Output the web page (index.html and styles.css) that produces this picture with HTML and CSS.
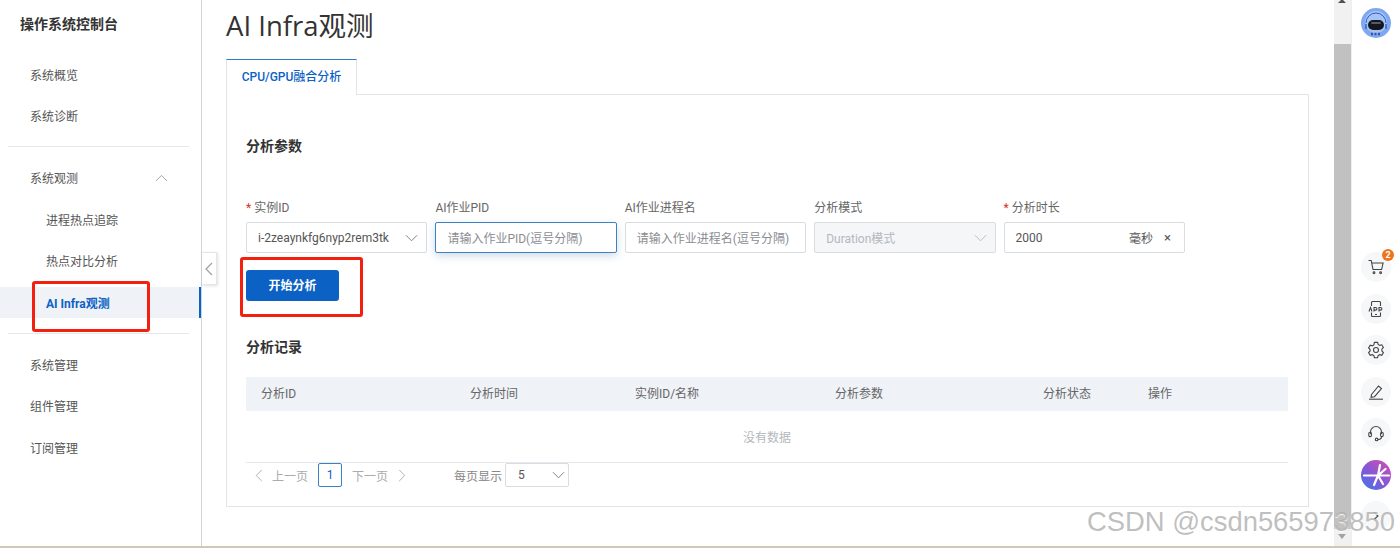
FILE: index.html
```html
<!DOCTYPE html>
<html lang="zh-CN">

<head>
    <meta charset="UTF-8">
    <meta name="viewport" content="width=device-width, initial-scale=1.0">
    <title>AI Infra观测</title>
    <link rel="stylesheet" href="styles.css">
</head>

<body>
    <div class="page">
        <!-- Sidebar -->
        <aside class="sidebar">
            <div class="brand">操作系统控制台</div>
            <nav class="menu">
                <a class="menu-item">系统概览</a>
                <a class="menu-item">系统诊断</a>
                <div class="menu-line line-one"></div>
                <a class="menu-item menu-open">系统观测
                    <svg class="menu-arrow" viewBox="0 0 14 8"><path d="M1 7.2 7 1.2l6 6" /></svg>
                </a>
                <a class="menu-item sub">进程热点追踪</a>
                <a class="menu-item sub">热点对比分析</a>
                <a class="menu-item sub active">AI Infra观测</a>
                <div class="menu-line line-two"></div>
                <a class="menu-item">系统管理</a>
                <a class="menu-item">组件管理</a>
                <a class="menu-item">订阅管理</a>
            </nav>
        </aside>

        <!-- Main content -->
        <main class="content">
            <h1 class="title">AI Infra观测</h1>
            <div class="tabs"><div class="tab">CPU/GPU融合分析</div></div>

            <section class="panel">
                <h2 class="section-title first">分析参数</h2>

                <div class="form-row">
                    <div class="field">
                        <label class="label"><span class="req">*</span>实例ID</label>
                        <div class="input select">
                            <span class="value">i-2zeaynkfg6nyp2rem3tk</span>
                            <svg class="chev" viewBox="0 0 14 8"><path d="M1 1l6 6 6-6" /></svg>
                        </div>
                    </div>
                    <div class="field">
                        <label class="label">AI作业PID</label>
                        <div class="input focus"><span class="holder">请输入作业PID(逗号分隔)</span></div>
                    </div>
                    <div class="field">
                        <label class="label">AI作业进程名</label>
                        <div class="input"><span class="holder">请输入作业进程名(逗号分隔)</span></div>
                    </div>
                    <div class="field">
                        <label class="label">分析模式</label>
                        <div class="input select disabled">
                            <span class="value">Duration模式</span>
                            <svg class="chev" viewBox="0 0 14 8"><path d="M1 1l6 6 6-6" /></svg>
                        </div>
                    </div>
                    <div class="field">
                        <label class="label"><span class="req">*</span>分析时长</label>
                        <div class="input">
                            <span class="value">2000</span>
                            <span class="unit">毫秒</span>
                            <span class="clear">×</span>
                        </div>
                    </div>
                </div>

                <button class="btn-primary">开始分析</button>

                <h2 class="section-title second">分析记录</h2>

                <div class="grid-head">
                    <div>分析ID</div>
                    <div>分析时间</div>
                    <div>实例ID/名称</div>
                    <div>分析参数</div>
                    <div>分析状态</div>
                    <div>操作</div>
                </div>
                <div class="grid-empty">没有数据</div>

                <div class="pager">
                    <svg class="pager-arrow" viewBox="0 0 8 14"><path d="M7 1 1 7l6 6" /></svg>
                    <span class="pager-text prev">上一页</span>
                    <span class="pager-num">1</span>
                    <span class="pager-text next">下一页</span>
                    <svg class="pager-arrow" viewBox="0 0 8 14"><path d="M1 1l6 6-6 6" /></svg>
                    <span class="pager-size">每页显示</span>
                    <div class="size-select">
                        <span>5</span>
                        <svg class="chev" viewBox="0 0 14 8"><path d="M1 1l6 6 6-6" /></svg>
                    </div>
                </div>
            </section>
        </main>

        <!-- Browser scrollbar -->
        <div class="scrollbar">
            <div class="scroll-up"></div>
            <div class="scroll-thumb"></div>
            <div class="scroll-down"></div>
        </div>

        <!-- Right tool rail -->
        <aside class="rail">
            <svg class="avatar" viewBox="0 0 30 30">
                <circle cx="15" cy="15" r="15" fill="#80a8f0" />
                <circle cx="15" cy="14" r="11" fill="#a6c3f6" />
                <path d="M5 15a10 10 0 0 1 20 0" fill="none" stroke="#2f5fc0" stroke-width="1" />
                <path d="M5 16v5M25 16v5" stroke="#2f5fc0" stroke-width="1.4" />
                <rect x="7" y="12" width="16" height="10" rx="5" fill="#14171d" />
                <rect x="10" y="14" width="10" height="2" rx="1" fill="#555c68" />
                <path d="M10 26h10" stroke="#2f54b0" stroke-width="2.5" stroke-dasharray="2 1.5" />
            </svg>

            <div class="rail-tools">
                <div class="tool">
                    <svg viewBox="0 0 18 18"><path d="M1.5 2.5h2.7l1.8 9h8.6l1.5-6.5H4.8" /><circle cx="7" cy="14.8" r=".9" /><circle cx="13.6" cy="14.8" r=".9" /></svg>
                    <span class="badge">2</span>
                </div>
                <div class="tool">
                    <svg viewBox="0 0 18 18"><path d="M4.5 6V2.5a1 1 0 0 1 1-1h7a1 1 0 0 1 1 1V6M4.5 12.5v3a1 1 0 0 0 1 1h7a1 1 0 0 0 1-1v-3" /><path d="M2 11.5l1.5-4 1.5 4M7 11.5v-4h1.6a1.2 1.2 0 0 1 0 2.6H7M12 11.5v-4h1.6a1.2 1.2 0 0 1 0 2.6H12M8 14.5h2" /></svg>
                </div>
                <div class="tool">
                    <svg viewBox="0 0 18 18"><path d="M7.4 1.8h3.2l.5 2.1 1.6.9 2.1-.6 1.6 2.7-1.5 1.6v1.9l1.5 1.6-1.6 2.7-2.1-.6-1.6.9-.5 2.1H7.4l-.5-2.1-1.6-.9-2.1.6-1.6-2.7 1.5-1.6V8.9L1.6 7.3l1.6-2.7 2.1.6 1.6-.9z" transform="translate(0 -.4)" /><circle cx="9" cy="9" r="2.5" /></svg>
                </div>
                <div class="tool">
                    <svg viewBox="0 0 18 18"><path d="M4.5 11.5 11.5 3l3 2.5-7 8.2-3.4.6z" /><path d="M2 16.2h14" /></svg>
                </div>
                <div class="tool">
                    <svg viewBox="0 0 18 18"><path d="M3.5 10V8a5.5 5.5 0 0 1 11 0v2" /><rect x="1.8" y="8.2" width="2.6" height="4.4" rx="1.2" /><rect x="13.6" y="8.2" width="2.6" height="4.4" rx="1.2" /><path d="M14.6 12.6c0 2-1.6 3-3.6 3" /><circle cx="9.6" cy="15.4" r="1.3" /></svg>
                </div>
                <svg class="spark" viewBox="0 0 30 30">
                    <defs>
                        <linearGradient id="sparkFill" x1="0.9" y1="0" x2="0.1" y2="1">
                            <stop offset="0" stop-color="#d24fb0" />
                            <stop offset="0.55" stop-color="#8358d8" />
                            <stop offset="1" stop-color="#3f78e8" />
                        </linearGradient>
                    </defs>
                    <circle cx="15" cy="15" r="15" fill="url(#sparkFill)" />
                    <path d="M3 15.5h25M17 15.5 19 5M17 15.5l7.5-6.5M17 15.5l5 8.5M17 15.5 13 25" fill="none" stroke="#fff" stroke-width="2.2" stroke-linecap="round" />
                </svg>
                <div class="tool">
                    <svg viewBox="0 0 18 18"><path d="M7 5.5l4 3.5-4 3.5" /></svg>
                </div>
            </div>
        </aside>
    </div>

    <!-- Things lying over the page -->
    <div class="collapse-handle">
        <svg viewBox="0 0 8 14"><path d="M7 1 1 7l6 6" /></svg>
    </div>
    <div class="mark mark-menu"></div>
    <div class="mark mark-btn"></div>
    <div class="watermark">CSDN @csdn565973850</div>
</body>

</html>
```

FILE: styles.css
```css
/* Reset */
* {
    margin: 0;
    padding: 0;
    box-sizing: border-box;
}

html,
body {
    height: 100%;
    overflow: hidden;
}

body {
    position: relative;
    background: #fff;
    color: #333;
    font-family: Roboto, "Noto Sans CJK SC", sans-serif;
    font-size: 12px;
    border-bottom: 2px solid #cfc8b2;
}

.page {
    display: flex;
    height: 546px;
}

/* Sidebar */
.sidebar {
    width: 202px;
    flex-shrink: 0;
    border-right: 1px solid #cfd2d6;
}

.brand {
    height: 48px;
    padding-left: 20px;
    line-height: 48px;
    font-size: 14px;
    font-weight: 700;
    color: #333;
}

.menu {
    display: flex;
    flex-direction: column;
    padding-top: 5.5px;
}

.menu-item {
    display: flex;
    align-items: center;
    justify-content: space-between;
    height: 41.5px;
    padding: 0 33px 0 30px;
    color: #555;
}

.menu-item.sub {
    padding-left: 46px;
}

.menu-item.active {
    height: 31px;
    margin-top: 5.5px;
    margin-bottom: 6px;
    padding-bottom: 1px;
    background: #eff2f7;
    border-right: 2px solid #0b62c4;
    color: #0b62c4;
    font-weight: 700;
}

.menu-arrow {
    width: 13px;
    height: 8px;
    fill: none;
    stroke: #9a9ea4;
    stroke-width: 1;
}

.menu-line {
    height: 1px;
    margin: 0 12px 0 8px;
    background: #e6e8eb;
}

.line-one {
    margin-top: 9.5px;
    margin-bottom: 10px;
}

.line-two {
    margin-top: 9px;
    margin-bottom: 9.5px;
}

/* Main content */
.content {
    flex: 1;
    min-width: 0;
    padding: 0 25px 0 24px;
}

.title {
    height: 59px;
    padding-top: 6px;
    line-height: 40px;
    font-family: "Open Sans", "Noto Sans CJK SC", sans-serif;
    font-size: 27.5px;
    font-weight: 400;
    color: #333;
}

.tabs {
    display: flex;
    height: 36px;
    margin-bottom: -1px;
}

.tab {
    position: relative;
    width: 131px;
    border: 1px solid #e1e4e8;
    border-top: 1px solid #2a80c8;
    border-bottom: 0;
    background: #fff;
    line-height: 35px;
    text-align: center;
    color: #0b62c4;
    font-weight: 500;
    z-index: 1;
}

.panel {
    height: 413px;
    padding: 0 20px 0 19px;
    border: 1px solid #e1e4e8;
}

.section-title {
    font-size: 14px;
    font-weight: 700;
    line-height: 20px;
    color: #333;
}

.section-title.first {
    padding-top: 41px;
    height: 61px;
}

.section-title.second {
    margin-top: 36px;
}

/* Form */
.form-row {
    display: flex;
    gap: 8px;
    margin-top: 42px;
}

.field {
    width: 181.4px;
}

.label {
    display: block;
    height: 24px;
    line-height: 20px;
    color: #666;
}

.req {
    margin-right: 3px;
    color: #d0342c;
}

.input {
    display: flex;
    align-items: center;
    height: 31px;
    padding: 0 11px;
    border: 1px solid #d9dce0;
    border-radius: 2px;
    background: #fff;
    color: #555;
    white-space: nowrap;
}

.input.select {
    padding-right: 8px;
}

.input.focus {
    border-color: #3b82c4;
    box-shadow: 0 3px 8px rgba(40, 90, 150, 0.22);
}

.input.disabled {
    background: #f4f6f8;
    color: #b4b8bd;
}

.holder {
    color: #8a8d92;
}

.value {
    flex: 1;
}

.unit {
    margin-right: 11px;
}

.clear {
    margin-right: 2px;
    font-size: 13px;
}

.chev {
    flex-shrink: 0;
    width: 13px;
    height: 8px;
    fill: none;
    stroke: #777;
    stroke-width: 1;
}

.disabled .chev {
    stroke: #b4b8bd;
}

.btn-primary {
    display: block;
    width: 93px;
    height: 31px;
    margin-top: 17px;
    padding-bottom: 2px;
    border: 0;
    border-radius: 3px;
    background: #0b62c4;
    color: #fff;
    font-family: inherit;
    font-size: 12px;
    font-weight: 700;
}

/* Records */
.grid-head {
    display: grid;
    grid-template-columns: 209px 165px 200px 208px 105px 155px;
    height: 34px;
    margin-top: 20px;
    background: #eff2f7;
    line-height: 34px;
    color: #666;
}

.grid-head div {
    padding-left: 15px;
}

.grid-empty {
    height: 52px;
    border-bottom: 1px solid #e6e8eb;
    line-height: 54px;
    text-align: center;
    color: #b4b8bd;
}

.pager {
    display: flex;
    align-items: center;
    height: 24px;
    padding-left: 9px;
    color: #a8abb0;
}

.pager-arrow {
    width: 8px;
    height: 13px;
    fill: none;
    stroke: #a8abb0;
    stroke-width: 1;
}

.pager-text.prev {
    margin: 0 10px 0 9px;
}

.pager-text.next {
    margin: 0 10px;
}

.pager-num {
    width: 24px;
    height: 24px;
    border: 1px solid #3b82c4;
    border-radius: 2px;
    line-height: 22px;
    text-align: center;
    color: #0b62c4;
}

.pager-size {
    margin-left: 48px;
    color: #888;
}

.size-select {
    display: flex;
    align-items: center;
    justify-content: space-between;
    width: 64px;
    height: 24px;
    margin-left: 3px;
    padding: 0 3px 0 12px;
    border: 1px solid #d9dce0;
    border-radius: 2px;
    color: #555;
}

/* Scrollbar */
.scrollbar {
    display: flex;
    flex-direction: column;
    width: 17px;
    flex-shrink: 0;
    background: #f1f1f1;
}

.scroll-up,
.scroll-down {
    height: 17px;
    flex-shrink: 0;
    position: relative;
}

.scroll-up::after,
.scroll-down::after {
    content: "";
    position: absolute;
    left: 4px;
    border-left: 4px solid transparent;
    border-right: 4px solid transparent;
}

.scroll-up::after {
    top: -1px;
    border-bottom: 4px solid #505050;
}

.scroll-down::after {
    top: 5px;
    border-top: 5px solid #a3a3a3;
}

.scroll-thumb {
    flex: 1;
    margin: 27px 0 0;
    background: #c1c1c1;
}

/* Right rail */
.rail {
    width: 49px;
    flex-shrink: 0;
    border-left: 1px solid #eceef0;
    padding-top: 8px;
    display: flex;
    flex-direction: column;
    align-items: center;
}

.avatar {
    width: 30px;
    height: 30px;
    flex-shrink: 0;
}

.rail-tools {
    display: flex;
    flex-direction: column;
    align-items: center;
    gap: 11.5px;
    margin-top: 214px;
}

.tool {
    position: relative;
    display: flex;
    align-items: center;
    justify-content: center;
    width: 30px;
    height: 30px;
    border-radius: 50%;
    background: #f6f7f8;
}

.tool svg {
    width: 18px;
    height: 18px;
    fill: none;
    stroke: #444;
    stroke-width: 1.1;
}

.badge {
    position: absolute;
    top: -3px;
    right: -3px;
    width: 12px;
    height: 12px;
    border-radius: 50%;
    background: #f0721e;
    color: #fff;
    font-size: 9px;
    font-weight: 700;
    line-height: 12px;
    text-align: center;
}

.spark {
    width: 30px;
    height: 30px;
}

/* Overlays */
.collapse-handle {
    position: absolute;
    left: 202px;
    top: 252px;
    display: flex;
    align-items: center;
    justify-content: center;
    width: 15px;
    height: 33px;
    background: #fff;
    border: 1px solid #e4e6e9;
    border-left: 0;
    box-shadow: 1px 1px 3px rgba(0, 0, 0, 0.12);
}

.collapse-handle svg {
    width: 8px;
    height: 14px;
    fill: none;
    stroke: #9a9ea4;
    stroke-width: 1.2;
}

.mark {
    position: absolute;
    border: 3px solid #f3200f;
    border-radius: 3px;
}

.mark-menu {
    left: 32px;
    top: 281px;
    width: 118px;
    height: 51px;
}

.mark-btn {
    left: 240px;
    top: 257px;
    width: 123px;
    height: 60px;
}

.watermark {
    position: absolute;
    left: 1087px;
    top: 505px;
    font-family: "Liberation Sans", sans-serif;
    font-size: 27.4px;
    line-height: 34px;
    white-space: nowrap;
    color: rgba(170, 170, 170, 0.75);
    text-shadow: 0 1px 1px rgba(255, 255, 255, 0.9);
}
```
